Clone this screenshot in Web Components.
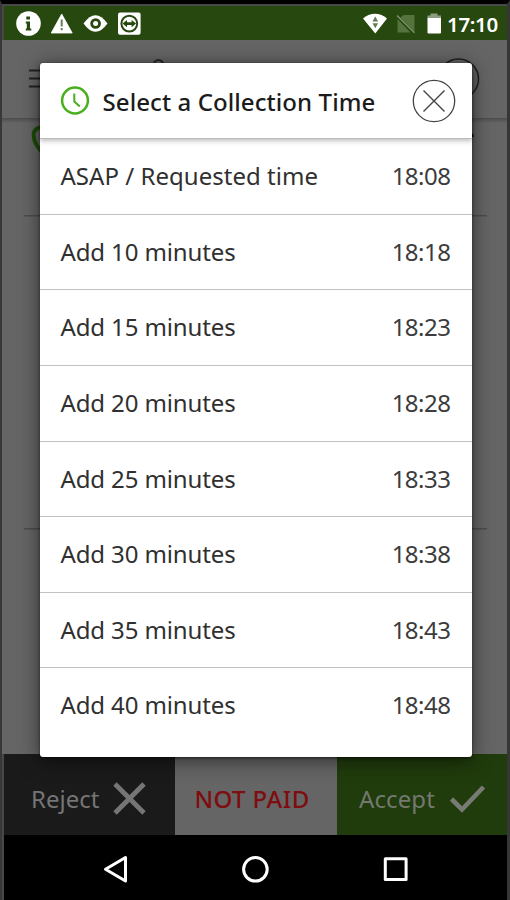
<!DOCTYPE html>
<html lang="en">
<head>
<meta charset="utf-8">
<title>Select a Collection Time</title>
<style>
html,body{margin:0;width:510px;height:900px;overflow:hidden;background:#000;font-family:"Noto Sans","Open Sans",sans-serif}
</style>
</head>
<body>
<device-frame>
  <status-bar slot="status" time="17:10"></status-bar>
  <order-page slot="page"></order-page>
  <action-bar slot="actions"></action-bar>
  <nav-bar slot="nav"></nav-bar>
  <time-dialog slot="dialog" heading="Select a Collection Time">
    <time-row time="18:08" style="--ls:.03px">ASAP / Requested time</time-row>
    <time-row time="18:18">Add 10 minutes</time-row>
    <time-row time="18:23">Add 15 minutes</time-row>
    <time-row time="18:28">Add 20 minutes</time-row>
    <time-row time="18:33">Add 25 minutes</time-row>
    <time-row time="18:38">Add 30 minutes</time-row>
    <time-row time="18:43">Add 35 minutes</time-row>
    <time-row time="18:48">Add 40 minutes</time-row>
  </time-dialog>
</device-frame>
<script>
const define = (name, render) => customElements.define(name, class extends HTMLElement {
  connectedCallback() {
    if (!this.shadowRoot) this.attachShadow({ mode: 'open' }).innerHTML = render(this);
  }
});

define('device-frame', () => `
<style>
:host{display:flex;flex-direction:column;position:relative;box-sizing:border-box;width:510px;height:900px;
 border-top:4px solid #000;border-left:2px solid #383838;border-right:3px solid #363636;background:#484848;padding-top:2px;overflow:hidden}
.dialog{position:absolute;left:37.5px;top:59px}
</style>
<slot name="status"></slot><slot name="page"></slot><slot name="actions"></slot><slot name="nav"></slot>
<div class="dialog"><slot name="dialog"></slot></div>`);

define('status-bar', el => `
<style>
:host{display:flex;justify-content:space-between;height:34px;margin-left:2px;background:#27480e;color:#fff}
svg{display:block}
.r{display:flex}
.t{width:60px;font:600 20.5px/36px "Noto Sans",sans-serif;letter-spacing:-.35px;white-space:nowrap}
</style>
<svg width="140" height="34" viewBox="4 6 140 34">
 <circle cx="28.5" cy="23.5" r="12.3" fill="#fff"/>
 <path d="M26.3 16.500h3.700v3h-3.700zM25.800 21.500h4.200v7h1.300v2h-5.500v-2h1v-5h-1z" fill="#27480e"/>
 <path d="M61.7 14 72.200 33h-21z" fill="#fff" stroke="#fff" stroke-width=".8" stroke-linejoin="round"/>
 <path d="M60.7 19.5h2v7h-2zM60.7 28h2v2.300h-2z" fill="#6b8058"/>
 <path d="M83.5 23.5Q95.5 6.800 107.500 23.500Q95.500 40.200 83.500 23.500z" fill="#fff"/>
 <circle cx="95.600" cy="23.500" r="5.300" fill="#27480e"/><circle cx="95.600" cy="23.500" r="2.500" fill="#fff"/>
 <rect x="118" y="12.500" width="22.600" height="22.300" rx="2" fill="#fff"/>
 <circle cx="129.300" cy="23.600" r="7.900" fill="none" stroke="#27480e" stroke-width="2"/>
 <path d="M122.500 23.600l4.500-3.600v2.300h4.600V20l4.500 3.600-4.500 3.600v-2.300H127v2.300z" fill="#27480e"/>
</svg>
<div class="r">
<svg width="87" height="34" viewBox="356 6 87 34">
 <path d="M359 18.500C365.500 12.200 376.500 12.200 383 18.500L371.300 33.500z" fill="#fff"/>
 <path d="M371.300 16.500l2.800 5h-5.600zM371.300 28.300l2.800-5h-5.600z" fill="#667854"/>
 <path d="M399.500 15h11v16.500L396.500 17.500zM393.500 19L406.500 32.500H393.500z" fill="#54733d"/>
 <path d="M393 15.500l17.500 17.300" stroke="#7d906e" stroke-width="1.500"/>
 <path d="M426.500 13.500h7v2h-7zM423.500 15.500h13.500v3h-13.500z" fill="#8d9d80"/>
 <path d="M423.500 18h13.500v14.500q0 1-1 1h-11.500q-1 0-1-1z" fill="#fff"/>
</svg>
<div class="t">${el.getAttribute('time')}</div></div>`);

define('order-page', () => `
<style>
:host{display:block;height:714px;background:#656565}
svg{display:block}
</style>
<svg width="505" height="714" viewBox="2 40 505 714">
 <defs><linearGradient id="h" x2="0" y2="1"><stop stop-color="#4c4c4c"/><stop offset="1" stop-color="#4c4c4c" stop-opacity="0"/></linearGradient></defs>
 <path d="M2 118h505v5H2z" fill="url(#h)"/>
 <path d="M29 70.500h20M29 78.500h20M29 86.500h20" stroke="#222" stroke-width="2"/>
 <circle cx="158.500" cy="64.500" r="4.500" fill="none" stroke="#262626" stroke-width="2"/>
 <circle cx="458.500" cy="79" r="20" fill="none" stroke="#1e1e1e" stroke-width="1.500"/>
 <path d="M46 127.500C29 125 30 142 46 156" fill="none" stroke="#1d4c06" stroke-width="4"/>
 <path d="M470 136.500l3.500-1.500" stroke="#111" stroke-width="3"/>
 <path d="M24 215.800h463M24 528.800h463" stroke="#4c4c4c" stroke-width="1.500"/>
</svg>`);

define('action-bar', () => `
<style>
:host{display:grid;grid-template-columns:171px 162px 170px;height:81px;margin-left:2px;font-size:24px;white-space:nowrap}
div{display:flex;align-items:center}
span{display:block;height:81px;line-height:89px}
.a{background:#1a1a1a;color:#757575;padding-left:27px;box-sizing:border-box;gap:13px}
.b{background:#656565;color:#7e0d10;justify-content:center;font-weight:500;letter-spacing:.45px}
.b span{margin-right:8px}
.c{background:#203b0c;color:#73796e;padding-left:22px;box-sizing:border-box;gap:14px;letter-spacing:.1px}
svg{flex:none;margin-top:9px}
</style>
<div class="a"><span>Reject</span><svg width="36" height="36"><path d="M3 3l29 29M32 3L3 32" stroke="#757575" stroke-width="4.800"/></svg></div>
<div class="b"><span>NOT PAID</span></div>
<div class="c"><span>Accept</span><svg width="38" height="36"><path d="M2.500 18l10.500 10.500L34.500 6" fill="none" stroke="#777b73" stroke-width="4.600"/></svg></div>`);

define('nav-bar', () => `
<style>:host{display:block;height:65px;margin-left:2px;background:#000}svg{display:block}</style>
<svg width="503" height="65" viewBox="4 835 503 65" fill="none" stroke="#fff" stroke-width="3" stroke-linejoin="round">
 <path d="M125.500 857.500v23.500L105.500 869.300z"/>
 <circle cx="255.400" cy="869.300" r="11.800"/>
 <rect x="385.300" y="858.800" width="20.800" height="20.800"/>
</svg>`);

define('time-dialog', el => `
<style>
:host{display:flex;flex-direction:column;width:432px;height:694px;background:#fff;border-radius:3px;box-shadow:0 3px 20px rgba(0,0,0,.55),0 1px 3px rgba(0,0,0,.5)}
header{display:flex;align-items:center;flex:none;padding:0 16px 0 20px;border-bottom:1px solid #bbb;box-shadow:0 2px 5px rgba(0,0,0,.25);box-sizing:border-box;height:76px}
h1{flex:1;margin:3px 0 0 13px;font-size:24px;line-height:36px;font-weight:500;color:#1c1c1c;white-space:nowrap;letter-spacing:.08px}
svg{flex:none}
</style>
<header>
<svg width="30" height="30" fill="none" stroke="#48b01d"><circle cx="15" cy="14.500" r="12.900" stroke-width="2.500"/><path d="M14.300 7.500v8l5.500 5" stroke-width="2"/></svg>
<h1>${el.getAttribute('heading')}</h1>
<svg width="44" height="44" fill="none" stroke="#444"><circle cx="22" cy="22" r="20.700" stroke-width="1.300"/><path d="M11.500 11.500l21 21M32.500 11.500l-21 21" stroke-width="1.400"/></svg>
</header>
<slot></slot>`);

define('time-row', el => `
<style>
:host{display:flex;justify-content:space-between;flex:none;box-sizing:border-box;height:75.65px;padding:0 21px;border-bottom:1.500px solid #c2c2c2;font-size:24px;line-height:74px;color:#303030;white-space:nowrap;letter-spacing:var(--ls,-.12px)}
:host(:last-of-type){border:0}
b{font-weight:400;letter-spacing:-.5px;color:#3c3c3c}
</style>
<span><slot></slot></span><b>${el.getAttribute('time')}</b>`);
</script>
</body>
</html>
